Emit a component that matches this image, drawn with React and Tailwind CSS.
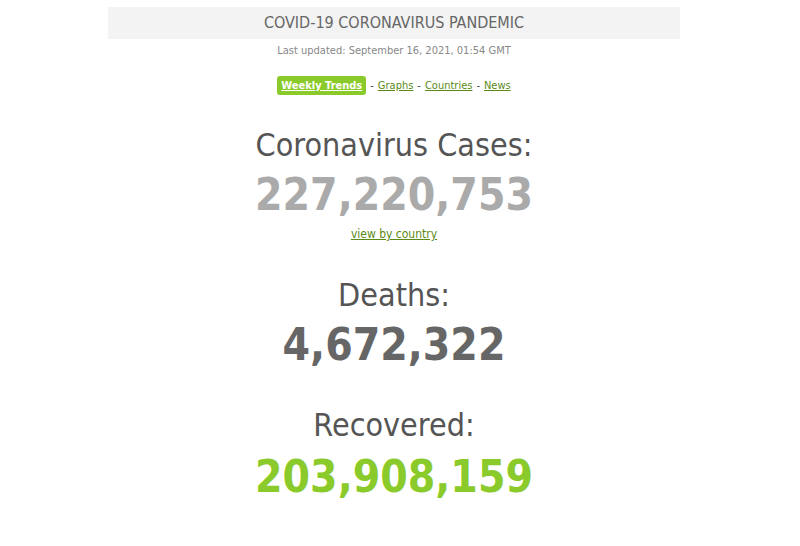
export default function App() {
  const font = { fontFamily: '"DejaVu Sans Condensed", "DejaVu Sans", Verdana, sans-serif' };
  return (
    <div className="w-[800px] h-[546px] bg-white overflow-hidden" style={font}>
      <div className="ml-[108px] w-[572px] flex flex-col items-center">
        <div className="mt-[7px] h-[32px] w-full bg-[#f3f3f3] flex items-center justify-center text-[16px] text-[#666666]">
          COVID-19 CORONAVIRUS PANDEMIC
        </div>
        <div className="mt-[5px] text-[11px] font-normal text-[#888888] leading-[13px]">
          Last updated: September 16, 2021, 01:54 GMT
        </div>
        <div className="mt-[19px] flex items-center text-[11px] leading-[13px] text-[#444444]">
          <span className="bg-[#8aca2b] rounded-[3px] px-[4px] py-[3px] text-white font-bold underline">Weekly Trends</span>
          <span className="mx-[4px]">-</span>
          <span className="text-[#5b8a16] underline">Graphs</span>
          <span className="mx-[4px]">-</span>
          <span className="text-[#5b8a16] underline">Countries</span>
          <span className="mx-[4px]">-</span>
          <span className="text-[#5b8a16] underline">News</span>
        </div>
        <div className="mt-[30px] text-[32px] leading-[40px] text-[#555555]">Coronavirus Cases:</div>
        <div className="mt-[5px] text-[44px] leading-[50px] font-bold text-[#aaaaaa]">227,220,753</div>
        <div className="mt-[7px] text-[12px] leading-[14px] text-[#5b8a16] underline">view by country</div>
        <div className="mt-[34px] text-[32px] leading-[40px] text-[#555555]">Deaths:</div>
        <div className="mt-[5px] text-[44px] leading-[50px] font-bold text-[#666666]">4,672,322</div>
        <div className="mt-[35px] text-[32px] leading-[40px] text-[#555555]">Recovered:</div>
        <div className="mt-[7px] text-[44px] leading-[50px] font-bold text-[#8aca2b]">203,908,159</div>
      </div>
    </div>
  );
}
